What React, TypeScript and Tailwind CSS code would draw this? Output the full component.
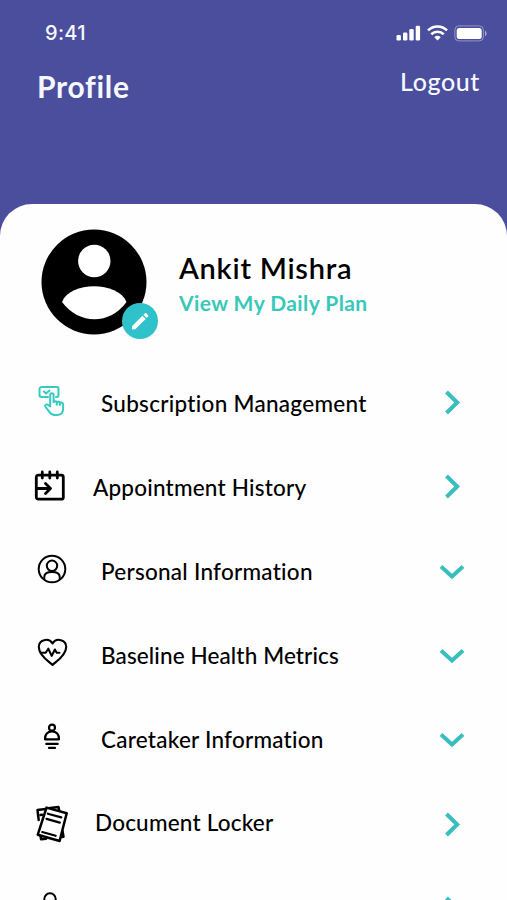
import type { ReactNode } from "react";

const stroke = {
  fill: "none",
  stroke: "currentColor",
  strokeLinecap: "round" as const,
  strokeLinejoin: "round" as const,
};

const SubscriptionIcon = () => (
  <svg width="28" height="32" viewBox="0 0 28 32" {...stroke} strokeWidth="2" className="text-[#35cbbd]">
    <path d="M10 12H3.5a2 2 0 0 1-2-2V4a2 2 0 0 1 2-2h15a2 2 0 0 1 2 2v6a2 2 0 0 1-2 2h-.5" />
    <path d="m6 6.500 2 2 3.500-3" />
    <path d="M12.200 21.500V10a1.700 1.700 0 0 1 3.400 0v7.200c.3-1.300 3-1.200 3.200.3.400-1 2.900-.9 3.100.5.700-.8 3.200-.4 3.200 1.600v4.100c0 3.800-2.200 6.300-6.300 6.300h-2c-3.400 0-4.500-1.600-5.600-3.300l-4-5.200c-.5-1.600 1.200-2.500 2.600-1.800z" />
    <path d="M18.800 17.800v2M21.900 18.300v1.700" />
  </svg>
);

const AppointmentIcon = () => (
  <svg width="32" height="32" viewBox="0 0 32 32" {...stroke} strokeWidth="2.800">
    <rect x="2.300" y="5.200" width="27" height="24" rx="2" />
    <path d="M8.300 2v6M15.800 2v6M23.300 2v6M3 18.500h13M11.500 13.500l5 5-5 5" />
  </svg>
);

const PersonIcon = () => (
  <svg width="30" height="30" viewBox="0 0 30 30" {...stroke} strokeWidth="2">
    <circle cx="15" cy="15" r="13.300" />
    <circle cx="15" cy="11.800" r="5.200" />
    <path d="M7.300 25.200v-2.400c0-3.200 3.400-4.800 7.700-4.800s7.700 1.600 7.700 4.800v2.400" />
  </svg>
);

const HeartIcon = () => (
  <svg width="31" height="29" viewBox="0 0 31 29" {...stroke} strokeWidth="2.100">
    <path d="M15.500 27C12 23.500 1.800 17.500 1.800 8.900 1.800 1.800 11.500-.8 15.500 5.300 19.500-.8 29.200 1.800 29.200 8.900 29.200 17.500 19 23.500 15.500 27Z" />
    <path d="M3.500 14.700h5.200l2.600-4 3.400 7.200 3.200-6.400 1.800 3.200h2.800" />
  </svg>
);

const CaretakerIcon = () => (
  <svg width="20" height="28" viewBox="0 0 20 28" {...stroke} strokeWidth="2.200">
    <circle cx="10" cy="4.700" r="3" />
    <path d="M3 16.300c0-5.200 2.800-7.800 7-7.800s7 2.600 7 7.800zM4.300 20.900h11.400M7 24.900h6" />
  </svg>
);

const DocumentIcon = () => (
  <svg width="34" height="38" viewBox="0 0 34 38" {...stroke} strokeWidth="2.500">
    <path d="m10.500 4-8 1 1.200 10M5.500 31l.6 3.300 5-.6M27.500 26l1 5.800-3 .4M15 3l8.500-1 .6 3" />
    <path d="M11.500 2.600 31.700 8.200 24.600 36 2.800 29.700Z" fill="white" />
    <path d="m5.500 10 1.500-.2" />
    <path d="M12.800 8.700l13.500 3.700M11.500 13.900l13.300 3.700M7.200 27l13.500 3.800" strokeWidth="2.200" />
  </svg>
);

const SupportIcon = () => (
  <svg width="22" height="34" viewBox="0 0 22 34" {...stroke} strokeWidth="2">
    <circle cx="11" cy="7" r="5.700" />
    <path d="M2 26c0-7 3-11 9-11s9 4 9 11z" />
  </svg>
);

const Chevron = ({ down }: { down?: boolean }) => (
  <svg width="26" height="26" viewBox="0 0 26 26" fill="none" stroke="#39bebd" strokeWidth="4">
    <path d={down ? "M2 7.500 13 17.500 24 7.500" : "M7.500 2 18.200 12.500 7.500 23"} />
  </svg>
);

type Item = { label: string; icon: ReactNode; down?: boolean; iconClass?: string; labelClass: string };

const items: Item[] = [
  { label: "Subscription Management", icon: <SubscriptionIcon />, iconClass: "pb-1", labelClass: "pl-[30px] pt-px tracking-[0.29px]" },
  { label: "Appointment History", icon: <AppointmentIcon />, iconClass: "pr-1 pb-0.5", labelClass: "pl-[22px] pt-px tracking-[0.21px]" },
  { label: "Personal Information", icon: <PersonIcon />, iconClass: "pb-1.5", labelClass: "pl-[30px] tracking-[0.26px]", down: true },
  { label: "Baseline Health Metrics", icon: <HeartIcon />, iconClass: "pb-2", labelClass: "pl-[30px] tracking-[0.12px]", down: true },
  { label: "Caretaker Information", icon: <CaretakerIcon />, iconClass: "pb-1.5", labelClass: "pl-[30px] tracking-[0.24px]", down: true },
  { label: "Document Locker", icon: <DocumentIcon />, iconClass: "pb-0.5", labelClass: "pl-[24px] pb-1 tracking-[0.2px]" },
  { label: "", icon: <SupportIcon />, iconClass: "pr-1", labelClass: "" },
];

function StatusIcons() {
  return (
    <div className="flex items-center gap-[6px] text-white">
      <svg width="25" height="16" viewBox="0 0 25 16" fill="currentColor">
        <rect x="0.500" y="10" width="4.400" height="5.500" rx="1.300" />
        <rect x="7" y="7.500" width="4.400" height="8" rx="1.300" />
        <rect x="13.300" y="4" width="4.400" height="11.500" rx="1.300" />
        <rect x="19.700" y="0.700" width="4.400" height="14.800" rx="1.300" />
      </svg>
      <svg width="21" height="16" viewBox="0 0 21 16" fill="none" stroke="currentColor" strokeWidth="2.600">
        <path d="M1 5.400a13.600 13.600 0 0 1 19 0M4.300 9.200a9 9 0 0 1 12.400 0" />
        <path d="M7.300 12.200a4.700 4.700 0 0 1 6.400 0L10.500 15.500Z" fill="currentColor" stroke="none" />
      </svg>
      <svg width="34" height="17" viewBox="0 0 34 17" fill="none">
        <rect x="0.900" y="0.900" width="28.500" height="15" rx="4" stroke="white" strokeOpacity="0.400" strokeWidth="1" />
        <rect x="2.700" y="2.900" width="25" height="11" rx="2.500" fill="white" />
        <path d="M31 5.800c2.200 1 2.200 4.400 0 5.400z" fill="white" fillOpacity="0.500" />
      </svg>
    </div>
  );
}

export default function App() {
  return (
    <div className="flex h-[900px] w-[507px] flex-col overflow-hidden bg-[#4a4e9d] font-['Lato','Noto_Sans',sans-serif] text-black">
      <header className="h-[204px] shrink-0 text-[#f5f8ff]">
        <div className="flex h-[66px] items-center justify-between pr-[19px] pl-[45px]">
          <span className="font-['Inter',sans-serif] text-[20px] leading-6 font-medium tracking-[0.3px]">9:41</span>
          <StatusIcons />
        </div>
        <div className="flex items-start justify-between pr-[27px] pl-[37px]">
          <h1 className="pt-[2px] text-[30px] leading-9 font-bold tracking-[0.7px]">Profile</h1>
          <button className="text-[25px] leading-[30px] font-medium tracking-[0.6px]">Logout</button>
        </div>
      </header>
      <main className="flex-1 rounded-t-[32px] bg-[#fefefe]">
        <section className="flex h-[157px] pt-[25px] pl-[41px]">
          <div className="relative h-[106px] w-[106px]">
            <svg width="106" height="106" viewBox="0 0 106 106">
              <circle cx="53" cy="53" r="52.500" fill="black" />
              <circle cx="53.300" cy="32" r="16.200" fill="white" />
              <path d="M21 73C29 52 77 52 85.500 73C69 96 38 96 21 73Z" fill="white" />
            </svg>
            <button className="absolute top-[74px] left-[81px] flex size-[36px] items-center justify-center rounded-full bg-[#30c2ca] text-white">
              <svg width="20" height="20" viewBox="0 0 20 20" fill="currentColor">
                <path d="M2 15.200 12.400 4.800l3.300 3.300L5.300 18.300 2 18.500ZM13.400 3.800l1.400-1.400c.5-.5 1.200-.5 1.700 0l1.500 1.500c.5.5.5 1.200 0 1.700l-1.300 1.400Z" />
              </svg>
            </button>
          </div>
          <div className="pt-[21px] pl-[32px]">
            <h2 className="text-[29px] leading-9 font-semibold tracking-[0.74px]">Ankit Mishra</h2>
            <a className="block pt-px text-[21px] leading-8 font-bold tracking-[0.42px] text-[#39c8b8]">View My Daily Plan</a>
          </div>
        </section>
        <ul>
          {items.map((item, index) => (
            <li key={index} className="flex h-[84.3px] items-center pr-[42px] pl-[33px]">
              <span className={`flex w-[38px] shrink-0 justify-center ${item.iconClass ?? ""}`}>{item.icon}</span>
              <span className={`flex-1 text-[22.500px] leading-8 font-medium whitespace-nowrap ${item.labelClass}`}>{item.label}</span>
              <Chevron down={item.down} />
            </li>
          ))}
        </ul>
      </main>
    </div>
  );
}
